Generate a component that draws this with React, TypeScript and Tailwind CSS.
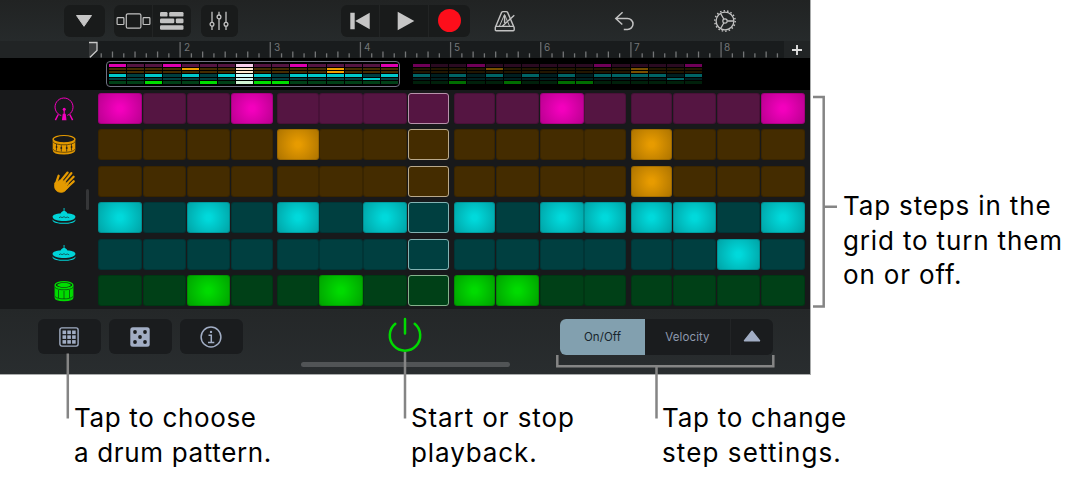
import React from "react";

type Voice = { name: string; base: string; lit: string; mini: string; icon: React.ReactNode; steps: number[] };

const CYAN = "bg-[radial-gradient(circle_at_center,#00d9db_10%,#00a0a3_100%)]";

function KickIcon() {
  return (
    <svg viewBox="0 0 24 24" className="h-6 w-6" fill="none" stroke="#f300bd" strokeWidth="1">
      <path d="M9.300 18.600A9 9 0 1 1 15.300 18.400" />
      <path d="M6.200 17.500L3.400 23.200M17.800 17.500L20.600 23.200" strokeWidth="1.500" />
      <path d="M12.200 12v6" strokeWidth="1.200" />
      <circle cx="12.200" cy="12.300" r="1.500" fill="#f300bd" stroke="none" />
      <path d="M10.700 16.700h3l.800 6.500h-4.600z" fill="#f300bd" stroke="none" />
    </svg>
  );
}

function SnareIcon() {
  return (
    <svg viewBox="0 0 24 24" className="h-6 w-6" fill="none" stroke="#e59a00" strokeWidth="1.200">
      <path d="M1.300 6.200v10.800c0 5.200 21.400 5.200 21.400 0V6.200z" fill="#e59a00" />
      <ellipse cx="12" cy="6.200" rx="10.800" ry="3.700" fill="#18191b" />
      <path d="M1 8.800c2 4 20 4 22 0M1 16.300c2 4 20 4 22 0" stroke="#3a2a06" strokeWidth=".7" />
      <path d="M4.500 11v6.500M9.300 12.200v6.300M14.700 12.200v6.300M19.500 11v6.500" stroke="#18191b" strokeWidth=".7" />
      <path d="M3.800 14h1.500M8.500 15h1.600M13.900 15h1.600M18.800 14h1.500" stroke="#18191b" strokeWidth="1.600" />
    </svg>
  );
}

function ClapIcon() {
  return (
    <svg viewBox="0 0 24 24" className="h-6 w-6" fill="none" stroke="#e59a00" strokeLinecap="round">
      <path d="M3.800 14L6.600 5.800M8.300 11.500L15.600 2.600M11 13L19.300 3.200M13.500 15L21.600 6.700M15 17.500L21.700 11.300" strokeWidth="2.300" />
      <path d="M3 13C5 12 6 11.500 7.600 10.200L11.500 10.600 16.300 13.400 17 16.500C13.800 20.500 12.600 22.300 9 22.300 3.500 22.300 1.500 17.500 3 13z" fill="#e59a00" strokeWidth=".8" />
      <path d="M11.500 10.900L15.800 5.700M13.700 13.100L18.800 7.500M15.500 15.400L20 11" stroke="#18191b" strokeWidth=".4" />
    </svg>
  );
}

function CymbalIcon() {
  return (
    <svg viewBox="0 0 24 24" className="h-6 w-6" fill="#00d4d8">
      <path d="M11.600 2h.9v5.500h-.9z" />
      <path d="M.6 13.400C3 18 21 18 23.400 13.400 25 19.300-1 19.300.6 13.400z" />
      <path d="M.6 10.700C.6 8.700 4.500 7.700 8.500 7.500 9.500 5.500 11 5 12 5s2.500.5 3.500 2.500c4 .2 7.900 1.200 7.900 3.200C23.400 16.500.6 16.500.6 10.700z" />
      <path d="M7 11.700l1.800-.8 1.200.8 2-1 1.800 1 1.400-.7 2 .8" stroke="#18191b" strokeWidth=".6" fill="none" />
    </svg>
  );
}

function TomIcon() {
  return (
    <svg viewBox="0 0 24 24" className="h-6 w-6" fill="none" stroke="#00dc00" strokeWidth="1.200">
      <path d="M3.200 6v12.800c0 3.700 17.600 3.700 17.600 0V6z" fill="#00dc00" />
      <ellipse cx="12" cy="6" rx="8.800" ry="3.300" fill="#18191b" />
      <ellipse cx="12" cy="6" rx="6.800" ry="2.200" fill="#00dc00" stroke="none" />
      <path d="M3 8.400c2 3.200 16 3.200 18 0M3 17.500c2 3.200 16 3.200 18 0M6.500 11v8M12 12v8M17.500 11v8" stroke="#083a10" strokeWidth=".7" />
    </svg>
  );
}

const voices: Voice[] = [
  { name: "kick", base: "bg-[#551542]", lit: "bg-[radial-gradient(circle_at_center,#f300bd_10%,#b6008d_100%)]", mini: "bg-[#e000b0]", icon: <KickIcon />, steps: [0, 3, 10, 15] },
  { name: "snare", base: "bg-[#442c00]", lit: "bg-[radial-gradient(circle_at_center,#e79b00_10%,#ab7200_100%)]", mini: "bg-[#f0a000]", icon: <SnareIcon />, steps: [4, 12] },
  { name: "clap", base: "bg-[#442c00]", lit: "bg-[radial-gradient(circle_at_center,#e79b00_10%,#ab7200_100%)]", mini: "bg-[#f0a000]", icon: <ClapIcon />, steps: [12] },
  { name: "hat", base: "bg-[#003f40]", lit: CYAN, mini: "bg-[#00c8ca]", icon: <CymbalIcon />, steps: [0, 2, 4, 6, 8, 10, 11, 12, 13, 15] },
  { name: "cymbal", base: "bg-[#003f40]", lit: CYAN, mini: "bg-[#00c8ca]", icon: <CymbalIcon />, steps: [14] },
  { name: "tom", base: "bg-[#004017]", lit: "bg-[radial-gradient(circle_at_center,#00db00_10%,#009f00_100%)]", mini: "bg-[#00dc00]", icon: <TomIcon />, steps: [2, 5, 8, 9] },
];

const cursorBorder = ["border-[#b792ab]", "border-[#b9a98b]", "border-[#b9a98b]", "border-[#83b3b3]", "border-[#83b3b3]", "border-[#84b28b]"];
const cursorMini = ["bg-[#f8d0ee]", "bg-[#ffe9cf]", "bg-[#ffe9cf]", "bg-[#d0ffff]", "bg-[#d0f4f4]", "bg-[#d0f4d4]"];
const miniHeight = ["h-[3px]", "h-[2px]", "h-[2px]", "h-[3px]", "h-[2px]", "h-[3px]"];
const columns = Array.from({ length: 16 }, (_, i) => i);

function Toolbar() {
  return (
    <div className="flex h-[41px] items-start bg-gradient-to-b from-[#212323] to-[#262a2b] pl-16 pt-[4.500px]">
      <div className="flex h-8 w-[41px] items-center justify-center rounded-md bg-[#191b1b]">
        <svg viewBox="0 0 18 14" className="mr-px h-3.5 w-[18px]"><path d="M1.500 1.500h15L9 12.300z" fill="#c6c6c6" stroke="#c6c6c6" strokeLinejoin="round" /></svg>
      </div>
      <div className="ml-[9px] flex h-8 w-[77px] rounded-md bg-[#191b1b]">
        <div className="flex w-[39px] items-center justify-center border-r border-[#222424]">
          <svg viewBox="0 0 35 16" className="h-4 w-[35px] shrink-0" fill="none" stroke="#c2c2c2" strokeWidth="1.200">
            <rect x="1.100" y="4.700" width="6.800" height="6.800" rx=".8" /><rect x="10.300" y=".8" width="14.600" height="14.400" rx="1.500" /><rect x="27.100" y="4.700" width="6.800" height="6.800" rx=".8" />
          </svg>
        </div>
        <div className="flex flex-1 items-center justify-center">
          <svg viewBox="0 0 24 18" className="h-[18px] w-6" fill="#c2c2c2">
            <rect x="0" y="0" width="7.500" height="4.600" rx="1.200" /><rect x="9.200" y="0" width="14.300" height="4.600" rx="1.200" />
            <rect x="0" y="6.600" width="14.300" height="4.600" rx="1.200" /><rect x="15.800" y="6.600" width="7.700" height="4.600" rx="1.200" />
            <rect x="0" y="13.200" width="23.500" height="4.600" rx="1.200" />
          </svg>
        </div>
      </div>
      <div className="ml-2.5 flex h-8 w-[37px] items-center justify-center rounded-md bg-[#191b1b]">
        <svg viewBox="0 0 20 20" className="mr-px h-5 w-5" fill="none" stroke="#c2c2c2" strokeWidth="1.300">
          <path d="M3 .8v10.700M3 15v4M10 .8v3.200M10 7.500v11.500M17 .8v10.700M17 15v4" />
          <circle cx="3" cy="13.200" r="1.900" /><circle cx="10" cy="5.900" r="1.900" /><circle cx="17" cy="13.200" r="1.900" />
        </svg>
      </div>
      <div className="ml-[103px] flex h-8 w-[129px] rounded-md bg-[#191b1b]">
        <div className="flex w-[39px] items-center justify-center border-r border-[#222424]">
          <svg viewBox="0 0 20 18" className="h-[18px] w-5" fill="#c6c6c6"><path d="M.3.700h4.400v16.600H.3zM19.700.700v16.600L5.200 9z" /></svg>
        </div>
        <div className="flex w-[49px] items-center justify-center border-r border-[#222424]">
          <svg viewBox="0 0 18 20" className="ml-1 h-5 w-[18px]"><path d="M.7.700L17.300 10 .7 19.300z" fill="#c6c6c6" /></svg>
        </div>
        <div className="flex flex-1 items-center justify-center"><div className="h-[23px] w-[23px] rounded-full bg-[#fd0e1b]" /></div>
      </div>
      <svg viewBox="0 0 22 22" className="ml-[23.700px] mt-[5px] h-[22px] w-[22px]" fill="none" stroke="#c2c2c2" strokeWidth="1.400">
        <path d="M1.300 17.500L7.600 2.400Q8.100 1.600 9 1.600h3.300q.9 0 1.300.8L18 12.600l2.200 5v2.200q0 1-1 1H2.300q-1 0-1-1z" />
        <path d="M1.500 16.400h18.500M10.600 5v8M8 16.400L20.300 5.300" /><path d="M5.500 16l5-11.500L15.500 16" strokeWidth="1" />
      </svg>
      <svg viewBox="0 0 22 20" className="ml-[98.800px] mt-1.5 h-5 w-[22px]" fill="none" stroke="#c2c2c2" strokeWidth="1.500">
        <path d="M8.600 1.300L1.800 7.500l6.500 6M1.800 7.500h11.700a5.500 5.500 0 0 1 0 11H9.800" />
      </svg>
      <svg viewBox="0 0 24 24" className="ml-[77px] mt-1 h-6 w-6" fill="none" stroke="#c2c2c2">
        <circle cx="12" cy="12" r="10.200" strokeWidth="1.500" strokeDasharray="1.500 2.060" /><circle cx="12" cy="12" r="8.900" strokeWidth="1.300" /><circle cx="12" cy="12" r="2.200" strokeWidth="1.200" />
        <path d="M14.300 12h6.500M10.800 10L7.600 4.500M10.800 14l-3.200 5.500" strokeWidth="1.300" />
      </svg>
    </div>
  );
}

function Ruler() {
  return (
    <div className="relative flex h-[17px] bg-[#212425]">
      <div className="ml-[89px] w-[694.500px] bg-[#191c1d]">
        <svg viewBox="0 0 694.500 17" className="h-[17px] w-[694.500px]">
          <path d="M0 1H8V9.500L1.500 17H0z" fill="#3b3d3e" /><path d="M0 1.500H8V9.500L1 16.300" fill="none" stroke="#c9c9c9" strokeWidth="1.300" />
          {Array.from({ length: 61 }, (_, i) => i + 1).map((i) => (
            <rect key={i} x={0.3 + i * 11.27} y={i % 8 === 0 ? 1 : i % 2 ? 12.300 : 10.500} width="1.300" height="16" fill={i % 8 === 0 ? "#696b6c" : "#747677"} />
          ))}
          <path d="M9 16.700h685" stroke="#191c1d" strokeWidth=".600" />
        </svg>
      </div>
      <div className="absolute left-[184px] top-[-1px] flex font-['Inter',sans-serif] text-[10px] leading-[14px] text-[#737576]">
        {[2, 3, 4, 5, 6, 7, 8].map((n) => <span key={n} className="w-[90px]">{n}</span>)}
      </div>
      <div className="flex flex-1 items-center justify-center"><svg viewBox="0 0 10 10" className="h-2.5 w-2.5"><path d="M5 0v10M0 5h10" stroke="#dedede" strokeWidth="1.900" /></svg></div>
    </div>
  );
}

function MiniPattern({ cursor }: { cursor?: boolean }) {
  return (
    <div className="flex w-[289px] flex-col gap-px">
      {voices.map((v, r) => (
        <div key={v.name} className={`flex gap-px ${miniHeight[r]}`}>
          {columns.map((c) => <div key={c} className={`flex-1 ${cursor && c === 7 ? cursorMini[r] : v.steps.includes(c) ? v.mini : v.base}`} />)}
        </div>
      ))}
    </div>
  );
}

function Sequencer() {
  return (
    <div className="relative flex h-[219px] bg-[#18191b]">
      <div className="flex w-[98.300px] flex-col gap-[12.450px] pl-[52px] pt-[7px]">
        {voices.map((v) => <div key={v.name} className="h-6 w-6">{v.icon}</div>)}
      </div>
      <div className="absolute left-[86px] top-[99px] h-[21px] w-[3px] rounded-full bg-[#353638]" />
      <div className="flex flex-col gap-[5.450px] pt-[3px]">
        {voices.map((v, r) => (
          <div key={v.name} className="grid h-[31px] grid-cols-[44.400px_44.200px_44px_46px_42.500px_44.100px_44.400px_46px_42px_44.200px_44.100px_46.400px_42.300px_44.200px_44px_44.600px]">
            {columns.map((c) => (
              <div key={c} className={`rounded-[3px] ${c === 7 || c === 11 ? "mr-[4.700px]" : c === 3 ? "mr-1" : "mr-[0.600px]"} ${c === 7 ? "border " + cursorBorder[r] : "border border-black/15"} bg-origin-border ${v.steps.includes(c) ? v.lit : v.base}`} />
            ))}
          </div>
        ))}
      </div>
    </div>
  );
}

function BottomBar() {
  return (
    <div className="relative flex h-[65px] items-start bg-gradient-to-b from-[#242728] to-[#292d2f] pl-[37.500px] pt-[10px]">
      <div className="flex gap-2">
        <div className="flex h-[35px] w-[63px] items-center justify-center rounded-md bg-[#1a1c1e]">
          <svg viewBox="0 0 20 20" className="h-5 w-5" fill="none" stroke="#a1adc4" strokeWidth="1.400">
            <rect x=".9" y=".9" width="18.200" height="18.200" rx="2" />
            <g fill="#a1adc4" stroke="none">{[3.500, 8.300, 13.100].flatMap((y) => [3.500, 8.300, 13.100].map((x) => <rect key={`${x}-${y}`} x={x} y={y} width="3.600" height="3.600" />))}</g>
          </svg>
        </div>
        <div className="flex h-[35px] w-[63px] items-center justify-center rounded-md bg-[#1a1c1e]">
          <svg viewBox="0 0 20 20" className="h-5 w-5" fill="#a1adc4"><rect x=".3" y=".3" width="19.400" height="19.400" rx="2.500" />
            {[[5, 5], [15, 5], [10, 10], [5, 15], [15, 15]].map(([x, y]) => <circle key={`${x}-${y}`} cx={x} cy={y} r="1.900" fill="#1a1c1e" />)}
          </svg>
        </div>
        <div className="flex h-[35px] w-[63px] items-center justify-center rounded-md bg-[#1a1c1e]">
          <svg viewBox="0 0 22 22" className="h-[22px] w-[22px]" fill="none" stroke="#a1adc4" strokeWidth="1.500">
            <circle cx="11" cy="11" r="9.900" /><path d="M8.500 9.300h2.800v7M8 16.400h6.300" /><circle cx="11" cy="5.900" r="1.200" fill="#a1adc4" stroke="none" />
          </svg>
        </div>
      </div>
      <svg viewBox="0 0 36 36" className="ml-[144.500px] mt-[-1.600px] h-9 w-9" fill="none" stroke="#00da00" strokeWidth="2.500" strokeLinecap="round">
        <path d="M8.300 6.800A15.200 15.200 0 1 0 27.700 6.800M18 2v14.500" />
      </svg>
      <div className="ml-[137px] flex h-[35.500px] w-[213px] overflow-hidden rounded-md bg-[#1a1c1e] font-['Inter',sans-serif] text-[11.500px] tracking-[0.100px]">
        <div className="flex w-[85px] items-center justify-center bg-[#82a0af] pt-px text-[#17252d]">On/Off</div>
        <div className="flex w-[86px] items-center justify-center border-r border-[#222426] pt-px text-[#8e99ae]">Velocity</div>
        <div className="flex flex-1 items-center justify-center"><svg viewBox="0 0 18 12" className="mb-0.5 h-3 w-[18px]"><path d="M1.500 10.800L9 1.200l7.500 9.600z" fill="#a1adc4" stroke="#a1adc4" strokeWidth="1.500" strokeLinejoin="round" /></svg></div>
      </div>
      <div className="absolute left-[301px] top-[53px] h-[5px] w-[209px] rounded-full bg-[#515456]" />
    </div>
  );
}

export default function App() {
  return (
    <div className="relative h-[480px] w-[1070px] overflow-hidden bg-white font-['Inter',sans-serif] text-[26px] leading-[34.700px] text-black">
      <div className="flex">
        <main className="h-[375px] w-[811px] border-b border-r border-[#aaacac]">
          <Toolbar />
          <Ruler />
          <div className="flex h-8 bg-black pl-[106px] pt-[3px]">
            <div className="h-[26px] w-[294px] rounded-sm border border-[#6f7182] pl-[2px] pt-[2px]"><MiniPattern cursor /></div>
            <div className="ml-[13px] pt-[3px] opacity-50"><MiniPattern /></div>
          </div>
          <Sequencer />
          <BottomBar />
        </main>
        <p className="whitespace-nowrap pl-8 pt-[189px] tracking-[0.850px]">Tap steps in the<br />grid to turn them<br />on or off.</p>
      </div>
      <div className="flex whitespace-nowrap pl-[74px] pt-[26px]">
        <p className="w-[337px] tracking-[0.650px]">Tap to choose<br />a drum pattern.</p>
        <p className="w-[251px] tracking-[0.900px]">Start or stop<br />playback.</p>
        <p><span className="tracking-[0.750px]">Tap to change</span><br /><span className="tracking-[1.100px]">step settings.</span></p>
      </div>
      <svg viewBox="0 0 1070 480" className="pointer-events-none absolute inset-0 h-[480px] w-[1070px]" fill="none" stroke="#858585" strokeWidth="2.500">
        <path d="M813 97h10.700v209.500H813M824 206.800h13M67.800 353.500v65M405 352v66.500M557.300 355v11.300h216V355M656.500 366v52.500" />
      </svg>
    </div>
  );
}
